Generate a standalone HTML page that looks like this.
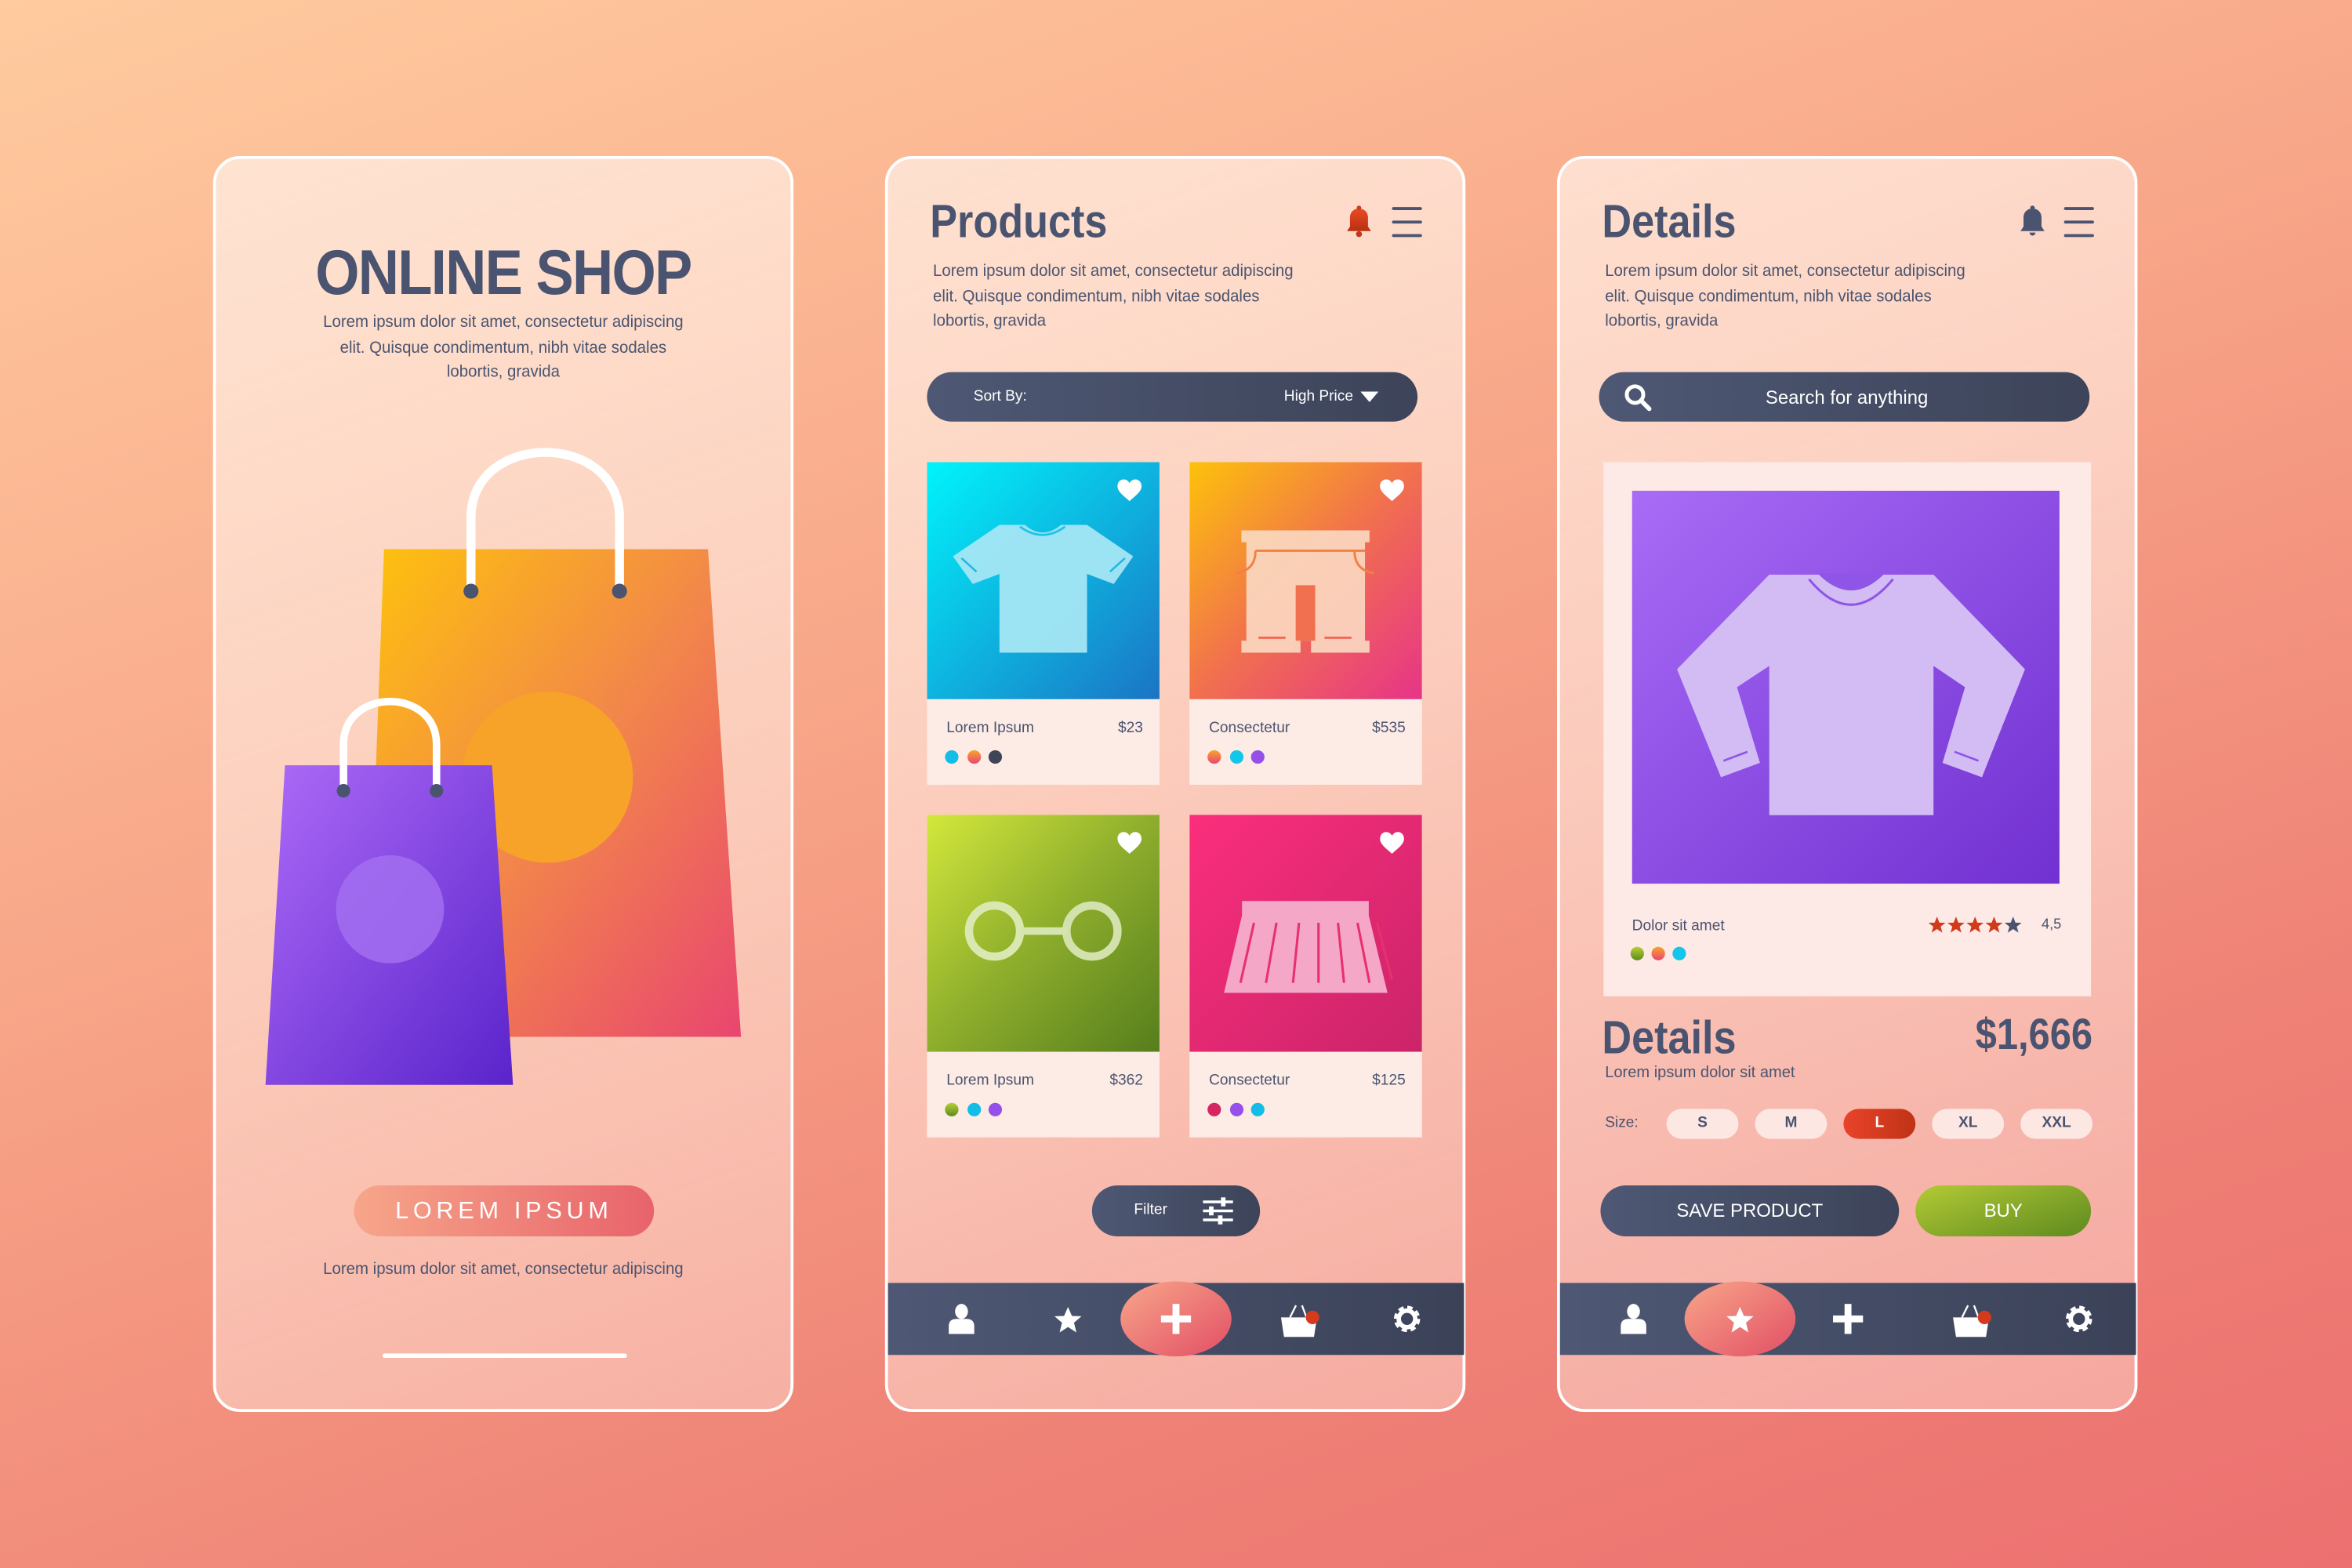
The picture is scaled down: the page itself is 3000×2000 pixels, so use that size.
<!DOCTYPE html>
<html><head><meta charset="utf-8">
<style>
*{margin:0;padding:0;box-sizing:border-box}
html,body{width:3000px;height:2000px;overflow:hidden}
body{background:linear-gradient(160deg,#ffcb9f 0%,#f8a789 40%,#ef8276 75%,#ec7070 100%);font-family:"Liberation Sans",sans-serif;color:#4a5470}
#st{position:absolute;left:0;top:0;width:1568px;height:1045px;transform:scale(1.91327,1.91388);transform-origin:0 0}
.a{position:absolute}
.panel{position:absolute;top:104px;width:387px;height:837px;border:2.5px solid #fff;border-radius:18px;background:linear-gradient(160deg,rgba(255,238,228,.75),rgba(255,225,215,.45));overflow:hidden}
.t{position:absolute;white-space:nowrap}
.h{font-weight:bold;color:#4a5470;transform-origin:0 50%}
.p{font-size:11px;line-height:16.7px;color:#4a5470;transform:scaleX(.97);transform-origin:0 0}
.dark{background:linear-gradient(90deg,#4e5874,#3d4459)}
.pill{position:absolute;border-radius:20px}
.card{position:absolute;width:155px;height:215px;background:#fdebe6}
.card .img{position:absolute;left:0;top:0;width:155px;height:158px}
.card .nm{position:absolute;left:13px;top:172px;font-size:10px}
.card .pr{position:absolute;right:11px;top:172px;font-size:10px}
.dot{position:absolute;width:9px;height:9px;border-radius:50%;top:192px}
.sz{position:absolute;top:739px;width:48px;height:20px;border-radius:10px;background:#fde7e3;font-size:10px;font-weight:bold;text-align:center;line-height:20px}
</style></head><body>
<div id="st">
<!-- PANEL 1 -->
<div class="panel" style="left:142px">
  <div class="t h" style="left:0;width:383px;text-align:center;top:52px;font-size:42px;letter-spacing:-1px;transform:scaleX(.9);transform-origin:50% 50%">ONLINE SHOP</div>
  <div class="t p" style="left:0;width:383px;text-align:center;top:101px;transform:scaleX(.97);transform-origin:50% 0">Lorem ipsum dolor sit amet, consectetur adipiscing<br>elit. Quisque condimentum, nibh vitae sodales<br>lobortis, gravida</div>
  <div class="pill" style="left:92px;top:684px;width:200px;height:34px;background:linear-gradient(90deg,#f7a68a,#e8636b)"></div>
  <div class="t" style="left:92px;width:200px;text-align:center;top:693px;color:#fff;font-size:16px;letter-spacing:3px">LOREM IPSUM</div>
  <div class="t p" style="left:0;width:383px;text-align:center;top:732px;transform-origin:50% 0">Lorem ipsum dolor sit amet, consectetur adipiscing</div>
  <div class="a" style="left:111px;top:796px;width:163px;height:3px;background:#fff;border-radius:2px"></div>
</div>
<!-- PANEL 2 -->
<div class="panel" style="left:590px"></div>
<!-- PANEL 3 -->
<div class="panel" style="left:1038px"></div>

<svg class="a" style="left:0;top:0" width="1568" height="1045" viewBox="0 0 1568 1045">
<defs>
<linearGradient id="gOr" x1="0" y1="0" x2="1" y2="1"><stop offset="0" stop-color="#fec20c"/><stop offset=".5" stop-color="#f2874a"/><stop offset="1" stop-color="#e9466f"/></linearGradient>
<linearGradient id="gPu" x1="0" y1="0" x2="1" y2="1"><stop offset="0" stop-color="#ad6af7"/><stop offset="1" stop-color="#5a24cb"/></linearGradient>
<linearGradient id="gCy" x1="0" y1="0" x2="1" y2="1"><stop offset="0" stop-color="#00f4fb"/><stop offset="1" stop-color="#1b74c4"/></linearGradient>
<linearGradient id="gSh" x1="0" y1="0" x2="1" y2="1"><stop offset="0" stop-color="#fdc20a"/><stop offset=".5" stop-color="#f1704e"/><stop offset="1" stop-color="#e73488"/></linearGradient>
<linearGradient id="gGr" x1="0" y1="0" x2="1" y2="1"><stop offset="0" stop-color="#d3e83c"/><stop offset=".5" stop-color="#8dad2c"/><stop offset="1" stop-color="#567e1c"/></linearGradient>
<linearGradient id="gPk" x1="0" y1="0" x2="1" y2="1"><stop offset="0" stop-color="#fb2e7c"/><stop offset="1" stop-color="#cb2469"/></linearGradient>
<linearGradient id="gSw" x1="0" y1="0" x2="1" y2="1"><stop offset="0" stop-color="#a86cf6"/><stop offset="1" stop-color="#7130d1"/></linearGradient>
<linearGradient id="gHi" x1="0" y1="0" x2="1" y2="1"><stop offset="0" stop-color="#f8a68a"/><stop offset="1" stop-color="#e24f65"/></linearGradient>
<linearGradient id="gRed" x1="0" y1="0" x2="0" y2="1"><stop offset="0" stop-color="#ea4a26"/><stop offset="1" stop-color="#b8300f"/></linearGradient>
<linearGradient id="gDark" x1="0" y1="0" x2="1" y2="0"><stop offset="0" stop-color="#4e5874"/><stop offset="1" stop-color="#3b4258"/></linearGradient>
<g id="heart"><path d="M0 4 C0 -1 6 -2 8 2 C10 -2 16 -1 16 4 C16 8 11 11 8 14 C5 11 0 8 0 4Z" fill="#fff"/></g>
<g id="bell"><path d="M-8 6 L8 6 L6 3 L6 -3 C6 -7 3 -9 0 -9 C-3 -9 -6 -7 -6 -3 L-6 3Z" fill="url(#gRed)"/><circle cx="0" cy="-9.5" r="1.5" fill="#d03d1b"/><circle cx="0" cy="8" r="2" fill="#c3361a"/></g>
<g id="menu" stroke="#4a5470" stroke-width="2" stroke-linecap="round"><line x1="0" y1="-9" x2="18" y2="-9"/><line x1="0" y1="0" x2="18" y2="0"/><line x1="0" y1="9" x2="18" y2="9"/></g>
<g id="user" fill="#fff"><ellipse cx="0" cy="-5" rx="4.3" ry="5"/><path d="M-8.5 10 L-8.5 5 C-8.5 1 -6 0 -3 0 L3 0 C6 0 8.5 1 8.5 5 L8.5 10Z"/></g>
<g id="star"><path d="M0 -9 L2.6 -3 L9 -2.8 L4 1.5 L5.6 8 L0 4.4 L-5.6 8 L-4 1.5 L-9 -2.8 L-2.6 -3Z" fill="#fff"/></g>
<g id="plus" fill="#fff"><rect x="-2.3" y="-10" width="4.6" height="20"/><rect x="-10" y="-2.3" width="20" height="4.6"/></g>
<g id="bag"><path d="M-6 -3 L-2 -11 M2 -11 L5 -3" stroke="#fff" stroke-width="1.2" fill="none"/><path d="M-12 -3 L12 -3 L10 10 L-10 10Z" fill="#fff"/><circle cx="9" cy="-3" r="4.5" fill="#d63a1c"/></g>
<g id="gear"><circle r="6.5" fill="none" stroke="#fff" stroke-width="4.5" stroke-dasharray="3 2.1"/><circle r="5.5" fill="none" stroke="#fff" stroke-width="3"/></g>
</defs>

<!-- Panel1 bags -->
<polygon points="256,366 472,366 494,691 244,691" fill="url(#gOr)"/>
<circle cx="365" cy="518" r="57" fill="#f7a229"/>
<path d="M314 393 L314 345 C314 287 413 287 413 345 L413 393" fill="none" stroke="#fff" stroke-width="6"/>
<circle cx="314" cy="394" r="5" fill="#4a5470"/><circle cx="413" cy="394" r="5" fill="#4a5470"/>
<polygon points="190,510 328,510 342,723 177,723" fill="url(#gPu)"/>
<circle cx="260" cy="606" r="36" fill="#a26ef0" opacity=".85"/>
<path d="M229 527 L229 496 C229 458 291 458 291 496 L291 527" fill="none" stroke="#fff" stroke-width="5"/>
<circle cx="229" cy="527" r="4.5" fill="#4a5470"/><circle cx="291" cy="527" r="4.5" fill="#4a5470"/>

<!-- Panel2 icons -->
<use href="#bell" x="906" y="148"/><use href="#menu" x="929" y="148"/>
<rect x="592" y="855" width="384" height="48" fill="url(#gDark)"/>
<ellipse cx="784" cy="879" rx="37" ry="25" fill="url(#gHi)"/>
<use href="#user" x="641" y="879"/><use href="#star" x="712" y="880"/><use href="#plus" x="784" y="879"/><use href="#bag" x="866" y="881"/><use href="#gear" x="938" y="879"/>

<!-- Panel3 icons -->
<path transform="translate(1355,148)" d="M-8 6 L8 6 L6 3 L6 -3 C6 -7 3 -9 0 -9 C-3 -9 -6 -7 -6 -3 L-6 3Z M-2 7 A2 2 0 0 0 2 7Z" fill="#4a5470"/><circle cx="1355" cy="138.5" r="1.5" fill="#4a5470"/>
<use href="#menu" x="1377" y="148"/>
<rect x="1040" y="855" width="384" height="48" fill="url(#gDark)"/>
<ellipse cx="1160" cy="879" rx="37" ry="25" fill="url(#gHi)"/>
<use href="#user" x="1089" y="879"/><use href="#star" x="1160" y="880"/><use href="#plus" x="1232" y="879"/><use href="#bag" x="1314" y="881"/><use href="#gear" x="1386" y="879"/>
</svg>

<!-- Panel 2 content -->
<div class="t h" style="left:620px;top:130px;font-size:31px;transform:scaleX(.88)">Products</div>
<div class="t p" style="left:622px;top:173px">Lorem ipsum dolor sit amet, consectetur adipiscing<br>elit. Quisque condimentum, nibh vitae sodales<br>lobortis, gravida</div>
<div class="pill dark" style="left:618px;top:248px;width:327px;height:33px"></div>
<div class="t" style="left:649px;top:259px;font-size:10px;color:#fff">Sort By:</div>
<div class="t" style="left:856px;top:259px;font-size:10px;color:#fff">High Price</div>
<svg class="a" style="left:907px;top:261px" width="12" height="8"><polygon points="0,0 12,0 6,7" fill="#fff"/></svg>

<div class="card" style="left:618px;top:308px">
 <svg class="img" viewBox="0 0 155 158"><rect width="155" height="158" fill="url(#gCy)"/>
 <path d="M48.3 41.8 L65.2 41.8 Q77 52 89.4 41.8 L106.7 41.8 L137.5 62.8 L124.5 81.2 L106.7 74.5 L106.7 127 L48.3 127 L48.3 74.5 L30.5 81.2 L17.3 62.8Z" fill="#a4e6f4" opacity=".95"/>
 <path d="M62 43 Q77 54 92 43" stroke="#22c3e6" stroke-width="1.5" fill="none"/>
 <path d="M23 64 L33 73 M132 64 L122 73" stroke="#22b8e0" stroke-width="1.3"/>
 <use href="#heart" x="127" y="12"/></svg>
 <div class="nm">Lorem Ipsum</div><div class="pr">$23</div>
 <div class="dot" style="left:12px;background:#14bde8"></div><div class="dot" style="left:27px;background:linear-gradient(#f9a42a,#e94672)"></div><div class="dot" style="left:41px;background:#3e4559"></div>
</div>
<div class="card" style="left:793px;top:308px">
 <svg class="img" viewBox="0 0 155 158"><rect width="155" height="158" fill="url(#gSh)"/>
 <path d="M34.6 45.5 H120 V53.4 H117 V119 H120 V127 H81 V119 H74 V127 H34.6 V119 H37.9 V53.4 H34.6Z" fill="#fbd9c2" opacity=".9"/>
 <rect x="70.8" y="82" width="13" height="37" fill="#f07050"/>
 <path d="M44 59 H117 M44 59 Q44 72 31 74 M110 59 Q110 72 123 74" stroke="#f28040" stroke-width="1.5" fill="none"/>
 <path d="M46 117 H64 M90 117 H108" stroke="#f06a55" stroke-width="1.5"/>
 <use href="#heart" x="127" y="12"/></svg>
 <div class="nm">Consectetur</div><div class="pr">$535</div>
 <div class="dot" style="left:12px;background:linear-gradient(#f9a42a,#e94672)"></div><div class="dot" style="left:27px;background:#14c6ea"></div><div class="dot" style="left:41px;background:#9650ea"></div>
</div>
<div class="card" style="left:618px;top:543px">
 <svg class="img" viewBox="0 0 155 158"><rect width="155" height="158" fill="url(#gGr)"/>
 <circle cx="45" cy="77.5" r="17" fill="none" stroke="#d9e8b0" stroke-width="5.5"/>
 <circle cx="110" cy="77.5" r="17" fill="none" stroke="#d3e2ac" stroke-width="5.5"/>
 <rect x="62" y="75" width="31" height="5" fill="#d6e5ae"/>
 <use href="#heart" x="127" y="12"/></svg>
 <div class="nm">Lorem Ipsum</div><div class="pr">$362</div>
 <div class="dot" style="left:12px;background:linear-gradient(#b6cf35,#5e8a1f)"></div><div class="dot" style="left:27px;background:#14bde8"></div><div class="dot" style="left:41px;background:#9650ea"></div>
</div>
<div class="card" style="left:793px;top:543px">
 <svg class="img" viewBox="0 0 155 158"><rect width="155" height="158" fill="url(#gPk)"/>
 <path d="M35 57.5 H119.5 V67 L132 118.7 H23 L35 67Z" fill="#f4a7c6"/>
 <path d="M43 72 L34 112 M58 72 L51 112 M73 72 L69 112 M86 72 L86 112 M99 72 L103 112 M112 72 L120 112 M125 72 L135 110" stroke="#e8306e" stroke-width="1.6"/>
 <use href="#heart" x="127" y="12"/></svg>
 <div class="nm">Consectetur</div><div class="pr">$125</div>
 <div class="dot" style="left:12px;background:#d62563"></div><div class="dot" style="left:27px;background:#9650ea"></div><div class="dot" style="left:41px;background:#14bde8"></div>
</div>
<div class="pill dark" style="left:728px;top:790px;width:112px;height:34px"></div>
<div class="t" style="left:756px;top:801px;font-size:10px;color:#fff">Filter</div>
<svg class="a" style="left:800px;top:797px" width="24" height="20"><g stroke="#fff" stroke-width="1.8"><line x1="2" y1="4" x2="22" y2="4"/><line x1="2" y1="10" x2="22" y2="10"/><line x1="2" y1="16" x2="22" y2="16"/></g><g fill="#fff"><rect x="14" y="1" width="3" height="6"/><rect x="6" y="7" width="3" height="6"/><rect x="12" y="13" width="3" height="6"/></g></svg>

<!-- Panel 3 content -->
<div class="t h" style="left:1068px;top:130px;font-size:31px;transform:scaleX(.88)">Details</div>
<div class="t p" style="left:1070px;top:173px">Lorem ipsum dolor sit amet, consectetur adipiscing<br>elit. Quisque condimentum, nibh vitae sodales<br>lobortis, gravida</div>
<div class="pill dark" style="left:1066px;top:248px;width:327px;height:33px"></div>
<svg class="a" style="left:1082px;top:255px" width="20" height="20"><circle cx="8" cy="8" r="5.5" fill="none" stroke="#fff" stroke-width="2.6"/><line x1="12" y1="12" x2="17.5" y2="17.5" stroke="#fff" stroke-width="3" stroke-linecap="round"/></svg>
<div class="t" style="left:1177px;top:258px;font-size:12.5px;color:#fff">Search for anything</div>
<div class="a" style="left:1069px;top:308px;width:325px;height:356px;background:#fde9e5"></div>
<svg class="a" style="left:1088px;top:327px" width="285" height="262" viewBox="1088 327 285 262">
 <rect x="1088" y="327" width="285" height="262" fill="url(#gSw)"/>
 <polygon points="1179.5,383 1211.6,383 1256.6,383 1289,383 1350,446 1321.3,518 1295,508.4 1310,458 1289,443.8 1289,543.3 1179.5,543.3 1179.5,443.8 1158,458 1173.3,508.4 1147.3,518 1118,446" fill="#d3bcf4"/>
 <path d="M1211.6 382 Q1234 405 1256.6 382Z" fill="#8f55e6"/>
 <path d="M1206 386 Q1234 420 1262 386" stroke="#8f55e6" stroke-width="1.6" fill="none"/>
 <path d="M1149 507 L1165 501 M1303 501 L1319 507" stroke="#8f55e6" stroke-width="1.4"/>
</svg>
<div class="t" style="left:1088px;top:612px;font-size:10px">Dolor sit amet</div>
<svg class="a" style="left:1282px;top:610px" width="72" height="14" viewBox="0 0 75 16">
 <path d="M7 1 L8.8 5.6 L13.5 5.7 L9.8 8.6 L11.1 13.2 L7 10.5 L2.9 13.2 L4.2 8.6 L0.5 5.7 L5.2 5.6Z" fill="#d13a1a"/>
 <path transform="translate(14.5,0)" d="M7 1 L8.8 5.6 L13.5 5.7 L9.8 8.6 L11.1 13.2 L7 10.5 L2.9 13.2 L4.2 8.6 L0.5 5.7 L5.2 5.6Z" fill="#d13a1a"/>
 <path transform="translate(29,0)" d="M7 1 L8.8 5.6 L13.5 5.7 L9.8 8.6 L11.1 13.2 L7 10.5 L2.9 13.2 L4.2 8.6 L0.5 5.7 L5.2 5.6Z" fill="#d13a1a"/>
 <path transform="translate(43.5,0)" d="M7 1 L8.8 5.6 L13.5 5.7 L9.8 8.6 L11.1 13.2 L7 10.5 L2.9 13.2 L4.2 8.6 L0.5 5.7 L5.2 5.6Z" fill="#d13a1a"/>
 <path transform="translate(58,0)" d="M7 1 L8.8 5.6 L13.5 5.7 L9.8 8.6 L11.1 13.2 L7 10.5 L2.9 13.2 L4.2 8.6 L0.5 5.7 L5.2 5.6Z" fill="#4a5470"/>
</svg>
<div class="t" style="left:1361px;top:611px;font-size:9.5px">4,5</div>
<div class="a" style="left:1087px;top:631px;width:9px;height:9px;border-radius:50%;background:linear-gradient(#b6cf35,#5e8a1f)"></div>
<div class="a" style="left:1101px;top:631px;width:9px;height:9px;border-radius:50%;background:linear-gradient(#f9a42a,#e94672)"></div>
<div class="a" style="left:1115px;top:631px;width:9px;height:9px;border-radius:50%;background:#14c6ea"></div>

<div class="t h" style="left:1068px;top:674px;font-size:31px;transform:scaleX(.88)">Details</div>
<div class="t h" style="left:1395px;top:674px;font-size:29px;transform:scaleX(.88) translateX(-100%);transform-origin:0 50%">$1,666</div>
<div class="t" style="left:1070px;top:709px;font-size:10.5px">Lorem ipsum dolor sit amet</div>
<div class="t" style="left:1070px;top:743px;font-size:10px">Size:</div>
<div class="sz" style="left:1111px">S</div>
<div class="sz" style="left:1170px">M</div>
<div class="sz" style="left:1229px;background:linear-gradient(90deg,#e9432a,#bf3316);color:#fff">L</div>
<div class="sz" style="left:1288px">XL</div>
<div class="sz" style="left:1347px">XXL</div>
<div class="pill dark" style="left:1067px;top:790px;width:199px;height:34px"></div>
<div class="t" style="left:1067px;width:199px;text-align:center;top:800px;font-size:12.5px;color:#fff">SAVE PRODUCT</div>
<div class="pill" style="left:1277px;top:790px;width:117px;height:34px;background:linear-gradient(160deg,#b3ca35,#5e8a1f)"></div>
<div class="t" style="left:1277px;width:117px;text-align:center;top:800px;font-size:12.5px;color:#fff">BUY</div>
</div>
</body></html>
